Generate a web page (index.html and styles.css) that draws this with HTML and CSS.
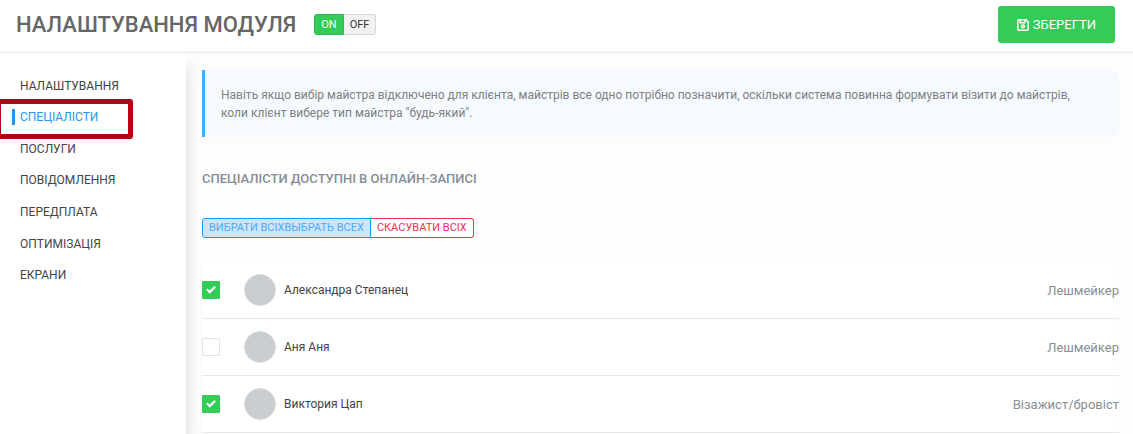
FILE: index.html
```html
<!DOCTYPE html>
<html lang="uk">
<head>
    <meta charset="UTF-8">
    <meta name="viewport" content="width=device-width, initial-scale=1.0">
    <title>Налаштування модуля</title>
    <link rel="stylesheet" href="styles.css">
</head>
<body>
    <header class="header">
        <h1>НАЛАШТУВАННЯ МОДУЛЯ</h1>
        <div class="switch">
            <button type="button" class="on">ON</button>
            <button type="button" class="off">OFF</button>
        </div>
        <button type="button" class="save">
            <svg width="12" height="12" viewBox="0 0 12 12" fill="none" stroke="#fff" stroke-width="1.5" aria-hidden="true">
                <path d="M1.8 .8H9L11.2 3v7.2a1 1 0 0 1-1 1H1.8a1 1 0 0 1-1-1V1.8a1 1 0 0 1 1-1z"/>
                <path d="M3.2 1v2.8h4.6V1"/>
                <circle cx="6" cy="7.4" r="1.4"/>
            </svg>
            ЗБЕРЕГТИ
        </button>
    </header>

    <div class="page">
        <nav class="sidebar">
            <ul>
                <li><a href="#">НАЛАШТУВАННЯ</a></li>
                <li class="active"><a href="#">СПЕЦІАЛІСТИ</a></li>
                <li><a href="#">ПОСЛУГИ</a></li>
                <li><a href="#">ПОВІДОМЛЕННЯ</a></li>
                <li><a href="#">ПЕРЕДПЛАТА</a></li>
                <li><a href="#">ОПТИМІЗАЦІЯ</a></li>
                <li><a href="#">ЕКРАНИ</a></li>
            </ul>
        </nav>

        <main class="content">
            <p class="note">Навіть якщо вибір майстра відключено для клієнта, майстрів все одно потрібно позначити, оскільки система повинна формувати візити до майстрів, коли клієнт вибере тип майстра "будь-який".</p>

            <h2>СПЕЦІАЛІСТИ ДОСТУПНІ В ОНЛАЙН-ЗАПИСІ</h2>

            <div class="select-buttons">
                <button type="button" class="select-all">ВИБРАТИ ВСІХВЫБРАТЬ ВСЕХ</button>
                <button type="button" class="clear-all">СКАСУВАТИ ВСІХ</button>
            </div>

            <ul class="staff">
                <li>
                    <input type="checkbox" id="staff-1" checked>
                    <span class="avatar"></span>
                    <label for="staff-1">Александра Степанец</label>
                    <span class="role">Лешмейкер</span>
                </li>
                <li>
                    <input type="checkbox" id="staff-2">
                    <span class="avatar"></span>
                    <label for="staff-2">Аня Аня</label>
                    <span class="role">Лешмейкер</span>
                </li>
                <li>
                    <input type="checkbox" id="staff-3" checked>
                    <span class="avatar"></span>
                    <label for="staff-3">Виктория Цап</label>
                    <span class="role">Візажист/бровіст</span>
                </li>
            </ul>
        </main>
    </div>
</body>
</html>
```
FILE: styles.css
```css
*, *::before, *::after {
    box-sizing: border-box;
}
body {
    font-family: Roboto, "Liberation Sans", sans-serif;
    font-size: 12px;
    color: #444;
    margin: 0;
    min-height: 100vh;
    display: flex;
    flex-direction: column;
    background-color: #fdfdfd;
}
button {
    font-family: inherit;
    cursor: pointer;
}
ul {
    list-style: none;
    margin: 0;
    padding: 0;
}

/* header */
.header {
    display: flex;
    align-items: center;
    padding: 6px 18px 8px 16px;
    background-color: #fff;
    border-bottom: 3px solid #f3f3f3;
}
h1 {
    font-size: 22px;
    line-height: 28px;
    font-weight: 500;
    color: #666;
    margin: 0 18px 0 0;
}
.switch {
    display: flex;
}
.switch button {
    font-size: 11px;
    line-height: 19px;
    padding: 0 6px;
    border: 1px solid #d8d8d8;
}
.switch .on {
    color: #fff;
    background-color: #33cc57;
    border-color: #2db84d;
    border-radius: 3px 0 0 3px;
}
.switch .off {
    color: #333;
    background-color: #f1f1f1;
    border-left: none;
    border-radius: 0 3px 3px 0;
}
.save {
    display: flex;
    align-items: center;
    gap: 4px;
    margin-left: auto;
    padding: 0 19px;
    font-size: 13px;
    line-height: 37px;
    color: #fff;
    background-color: #33cc57;
    border: none;
    border-radius: 3px;
}

/* page */
.page {
    flex: 1;
    display: flex;
}
.sidebar {
    width: 186px;
    flex-shrink: 0;
    padding-top: 16px;
    background-color: #fff;
    box-shadow: 0 12px 16px rgba(0, 0, 0, 0.16);
    clip-path: inset(0 -20px 0 0);
}
.sidebar ul {
    display: grid;
    grid-auto-rows: 1fr;
    min-height: 221px;
}
.sidebar li {
    display: flex;
    align-items: center;
    padding-left: 12px;
    position: relative;
}
.sidebar a {
    padding-left: 5px;
    border-left: 3px solid transparent;
    line-height: 16px;
    color: #444;
    text-decoration: none;
}
.sidebar .active a {
    color: #2196f3;
    border-left-color: #2196f3;
}
.sidebar .active::after {
    content: "";
    position: absolute;
    top: -3px;
    left: -4px;
    width: 137px;
    height: 40px;
    border: 5px solid #b5001a;
    border-radius: 3px;
}

/* content */
.content {
    flex: 1;
    padding: 16px 14px 0 16px;
}
.note {
    margin: 0;
    padding: 16px 32px 15px 16px;
    line-height: 18px;
    color: #808080;
    background-color: #f4faff;
    border-left: 3px solid #4dabf5;
    border-radius: 0 8px 8px 0;
}
h2 {
    font-size: 13px;
    line-height: 16px;
    font-weight: 500;
    color: #868e96;
    margin: 34px 0 31px;
}
.select-buttons {
    display: flex;
    margin-bottom: 24px;
}
.select-buttons button {
    font-size: 11px;
    line-height: 18px;
    padding: 0 6px;
    border: 1px solid;
}
.select-buttons .select-all {
    color: #4dabf5;
    background-color: #cce5fb;
    border-color: #2196f3;
    border-radius: 3px 0 0 3px;
}
.select-buttons .clear-all {
    color: #f03050;
    background-color: #fff;
    border-left: none;
    border-radius: 0 3px 3px 0;
}
.staff {
    background-color: #fff;
}
.staff li {
    display: flex;
    align-items: center;
    padding: 12px 0;
    border-bottom: 1px solid #e8e8e8;
}
.staff input {
    appearance: none;
    width: 18px;
    height: 18px;
    margin: 0;
    display: grid;
    place-items: center;
    background-color: #fff;
    border: 1px solid #e2e2e2;
    border-radius: 1px;
}
.staff input:checked {
    background-color: #33cc57;
    border-color: #33cc57;
}
.staff input:checked::before {
    content: "";
    width: 10px;
    height: 8px;
    background-color: #fff;
    clip-path: polygon(0 50%, 14% 32%, 36% 56%, 82% 0, 100% 20%, 38% 98%);
}
.avatar {
    width: 32px;
    height: 32px;
    margin: 0 8px 0 24px;
    background-color: #c9cdd0;
    border: 1px solid #d8dcdf;
    border-radius: 50%;
}
.role {
    margin-left: auto;
    font-size: 13px;
    color: #868e96;
}
```
